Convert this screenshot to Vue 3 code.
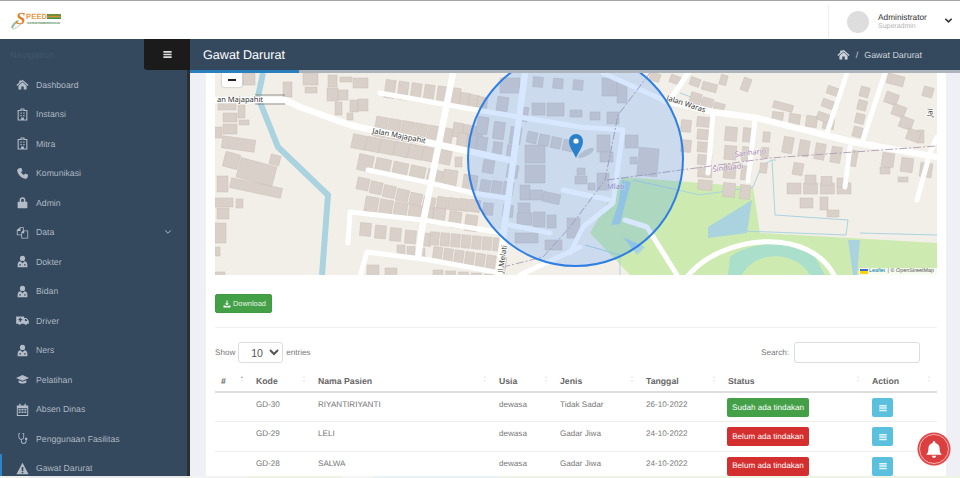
<template>
  <div class="app">
    <header class="topbar">
      <svg class="logo" viewBox="0 0 52 20" width="52" height="20">
        <path d="M1 18 C2 14 5 11 9 10 L8 12 C6 13 4 15 3 18 Z" fill="#8fb89a" />
        <path d="M2 19 C5 19 8 17 11 14" fill="none" stroke="#b9cdb9" stroke-width="1" />
        <text x="6" y="14" class="logo-s">S</text>
        <text x="16" y="9" class="logo-name" textLength="21">PEED</text>
        <rect x="37" y="4" width="14" height="2" fill="#6f8f3a" />
        <rect x="37" y="6" width="14" height="1.2" fill="#d98a2b" />
        <rect x="37" y="7.2" width="14" height="1.8" fill="#4c8a3f" />
        <text x="17" y="14" class="logo-sub" textLength="33">SISTEM PEMBERDAYAAN</text>
      </svg>
      <div class="user">
        <div class="avatar"></div>
        <div class="user-text">
          <div class="user-name">Administrator</div>
          <div class="user-role">Superadmin</div>
        </div>
        <svg class="user-caret" viewBox="0 0 10 10" width="9" height="9">
          <path d="M1.5 3 L5 6.5 L8.5 3" fill="none" stroke="#333" stroke-width="1.8" />
        </svg>
      </div>
    </header>

    <div class="frame">
      <aside class="sidebar">
        <div class="side-top">
          <span class="nav-label">Navigation</span>
          <button class="toggle">
            <svg viewBox="0 0 16 16" width="11" height="11"><path :d="icons.bars" fill="#ddd" /></svg>
          </button>
        </div>
        <nav class="nav">
          <a v-for="item in menu" :key="item.label" class="nav-item" :class="{ active: item.active }">
            <svg class="nav-icon" viewBox="0 0 16 16" width="13" height="13">
              <path :d="icons[item.icon]" fill="#b4bdc7" fill-rule="evenodd" />
            </svg>
            <span class="nav-text">{{ item.label }}</span>
            <svg v-if="item.sub" class="nav-caret" viewBox="0 0 10 10" width="8" height="8">
              <path d="M1.5 3 L5 6.5 L8.5 3" fill="none" stroke="#b4bdc7" stroke-width="1.2" />
            </svg>
          </a>
        </nav>
      </aside>

      <main class="main">
        <div class="page-head">
          <h1 class="page-title">Gawat Darurat</h1>
          <div class="crumbs">
            <svg viewBox="0 0 16 16" width="13" height="13"><path :d="icons.home" fill="#cdd3d9" fill-rule="evenodd" /></svg>
            <span class="crumb-sep">/</span>
            <span>Gawat Darurat</span>
          </div>
        </div>
        <div class="load-strip"><div class="load-bar"></div></div>

        <div class="content">
          <section class="card">
            <div class="map">
              <svg class="map-svg" viewBox="215 73 722 202" width="722" height="202">
                <rect x="215" y="73" width="722" height="202" fill="#f2efe9" />
                <polygon points="622,177 753,187 760,233 937,243 937,275 630,275 590,233" fill="#cdebb0" />
                <path d="M728 275 L730 257 C745 243 795 238 813 253 L825 275 Z" fill="#aae0cb" />
                <path d="M742 275 C755 250 795 250 810 275 Z" fill="#cdebb0" />
                <polygon points="708,227 752,200 747,233 708,238" fill="#aad3df" />
                <polygon points="622,180 631,182 623,212 620,224 611,225 618,205" fill="#aad3df" />
                <polygon points="623,237 645,247 637,255" fill="#aad3df" />
                <polygon points="848,240 860,240 857,275 853,275" fill="#aad3df" />
                <polyline points="263,73 258,97 278,147 328,195 322,275" class="river" />
                <polyline v-for="(s, i) in streams" :key="'st' + i" :points="s" class="stream" />
                <rect v-for="(b, i) in buildings" :key="'b' + i" :x="b.x" :y="b.y" :width="b.w" :height="b.h"
                  :transform="`rotate(${b.r} ${b.x + b.w / 2} ${b.y + b.h / 2})`" class="building" />
                <polyline v-for="(r, i) in roads" :key="'r' + i" :points="r" class="road" />
                <polyline v-for="(r, i) in lanes" :key="'l' + i" :points="r" class="lane" />
                <path d="M687 277 C720 235 810 225 835 277" class="lane" />
                <polyline points="625,220 647,227 677,275" class="lane" />
                <polyline points="607,180 770,158 937,146" class="border-line" />
                <polyline points="650,73 618,115 605,180 570,227 543,257 503,267" class="border-line" />
                <line x1="255" y1="95" x2="285" y2="95" stroke="#555" stroke-width=".6" />
                <line x1="255" y1="104" x2="285" y2="104" stroke="#555" stroke-width=".6" />

                <text x="217" y="102" class="map-label">an Majapahit</text>
                <text x="372" y="133" transform="rotate(11 372 133)" class="map-label">Jalan Majapahit</text>
                <text x="666" y="100" transform="rotate(18 666 100)" class="map-label">Jalan Waras</text>
                <text x="503" y="273" transform="rotate(-82 503 273)" class="map-label">Jl Melati</text>
                <text x="932" y="117" transform="rotate(-82 932 117)" class="map-label">Jal</text>
                <text x="735" y="157" transform="rotate(-7 735 157)" class="area-label">Sariharjo</text>
                <text x="713" y="172" transform="rotate(-7 713 172)" class="area-label">Sinduadi</text>
                <text x="607" y="189" class="area-label">Mlati</text>

                <circle cx="575.5" cy="158.5" r="107.5" class="radius" />
                <ellipse cx="586" cy="153" rx="9" ry="3" fill="#000" opacity=".12" transform="rotate(-30 586 153)" />
                <path d="M576 158 C573 151 569 147 569 141 A7 7 0 0 1 583 141 C583 147 579 151 576 158 Z" fill="#2a81cb" />
                <circle cx="576" cy="141" r="2.6" fill="#fff" />
              </svg>
              <div class="zoom-ctl"><span class="zoom-minus"></span></div>
              <div class="attribution"><span class="flag"></span><span class="attr-link">Leaflet</span> | © OpenStreetMap</div>
            </div>

            <button class="btn-download">
              <svg viewBox="0 0 16 16" width="8" height="8"><path :d="icons.download" fill="#fff" /></svg>
              Download
            </button>
            <div class="divider"></div>

            <div class="dt-controls">
              <label class="dt-length">
                Show
                <select class="dt-select"><option>10</option></select>
                entries
              </label>
              <label class="dt-search">
                Search:
                <input class="dt-input" type="text" />
              </label>
            </div>

            <table class="dt">
              <colgroup>
                <col v-for="c in columns" :key="c.name" :style="{ width: c.width + 'px' }" />
              </colgroup>
              <thead>
                <tr>
                  <th v-for="c in columns" :key="c.name">
                    <span>{{ c.name }}</span>
                    <span class="sort"><i class="up" :class="{ on: c.name === '#' }"></i><i class="down"></i></span>
                  </th>
                </tr>
              </thead>
              <tbody>
                <tr v-for="row in rows" :key="row.kode">
                  <td></td>
                  <td>{{ row.kode }}</td>
                  <td>{{ row.nama }}</td>
                  <td>{{ row.usia }}</td>
                  <td>{{ row.jenis }}</td>
                  <td>{{ row.tanggal }}</td>
                  <td class="cell-btn">
                    <span class="status" :class="row.done ? 'done' : 'todo'">
                      {{ row.done ? 'Sudah ada tindakan' : 'Belum ada tindakan' }}
                    </span>
                  </td>
                  <td class="cell-btn">
                    <button class="btn-action">
                      <svg viewBox="0 0 16 16" width="10" height="10"><path :d="icons.bars" fill="#e6f5fa" /></svg>
                    </button>
                  </td>
                </tr>
              </tbody>
            </table>
          </section>
        </div>
      </main>
    </div>

    <div class="bottom-strip"></div>

    <button class="bell">
      <svg viewBox="0 0 16 16" width="20" height="20"><path :d="icons.bell" fill="#fff" /></svg>
    </button>
  </div>
</template>

<script setup>
const icons = {
  home: 'M8 2 L15.5 8.5 L14.5 9.7 L8 4.2 L1.5 9.7 L.5 8.5 L4 5.5 V3 H6 V3.8 Z M3 9.5 L8 5.3 L13 9.5 V14 H9.5 V10.5 H6.5 V14 H3 Z',
  hospital: 'M5.5 .5h5v2H14v13H2V2.5h3.5z M3.3 3.8V14.2h3v-2.4h3.4v2.4h3V3.8z M6.8 1.7V3.2h2.4V1.7z M5.5 5.5h1.6v1.6H5.5z M8.9 5.5h1.6v1.6H8.9z M5.5 8.5h1.6v1.6H5.5z M8.9 8.5h1.6v1.6H8.9z',
  phone: 'M4 1.5 L6.5 1 L8 4.8 L6.2 6.2 C6.8 7.8 8.2 9.2 9.8 9.8 L11.2 8 L15 9.5 L14.5 12 C14.2 13.8 12.5 14.8 10.8 14.4 C6.5 13.4 2.6 9.5 1.6 5.2 C1.2 3.5 2.2 1.8 4 1.5 Z',
  lock: 'M4.5 7V5a3.5 3.5 0 0 1 7 0v2H13a1 1 0 0 1 1 1v6a1 1 0 0 1-1 1H3a1 1 0 0 1-1-1V8a1 1 0 0 1 1-1z M6.3 7h3.4V5a1.7 1.7 0 0 0-3.4 0z',
  files: 'M1 5 L5 1.5 H9.5 V5.5 H15 V15.5 H6.5 V11.5 H1 Z M2 5.8 V10.5 H6.5 V8 L8.5 5.5 V2.5 H5.5 V6 H2.2 Z M7.5 8.5 V14.5 H14 V6.5 H10 V9 H7.8 Z',
  userMd: 'M8 1a3.2 3.2 0 1 1 0 6.4A3.2 3.2 0 0 1 8 1z M2 15v-3c0-2.5 1.5-4 3.5-4.3L8 10l2.5-2.3C12.5 8 14 9.5 14 12v3z M4 12.2a1 1 0 1 0 2 0a1 1 0 1 0-2 0z M10 12.2a1 1 0 1 0 2 0a1 1 0 1 0-2 0z',
  ambulance: 'M.2 3h9.8v2h3l2.8 3.5V12h-1.9a2 2 0 0 1-3.8 0H6.4a2 2 0 0 1-3.8 0H.2z M11 6.2V8.5h3l-1.6-2.3z M4.5 4.6v1.6H3v1.6h1.5v1.6h1.6V7.8h1.5V6.2H6.1V4.6z',
  cap: 'M8 2.5 L16 6 L8 9.5 L0 6Z M3.3 8.8 L8 10.8 L12.7 8.8 V11.8 C11 13.4 5 13.4 3.3 11.8Z',
  calendar: 'M1 3h3V1h1.6v2h4.8V1H12v2h3v13H1z M2.2 6.5v8.3h11.6V6.5z M3.3 7.5h2.4v1.8H3.3z M6.8 7.5h2.4v1.8H6.8z M10.3 7.5h2.4v1.8h-2.4z M3.3 10.5h2.4v1.8H3.3z M6.8 10.5h2.4v1.8H6.8z M10.3 10.5h2.4v1.8h-2.4z',
  stethoscope: 'M3 1.5h2v1H4V6a2.5 2.5 0 0 0 5 0V2.5H8v-1h2V6a3.5 3.5 0 0 1-3 3.46V11a2.5 2.5 0 0 0 5 0V9.8a1.5 1.5 0 1 1 1 0V11a3.5 3.5 0 0 1-7 0V9.46A3.5 3.5 0 0 1 3 6z',
  warning: 'M8 1 L15.5 15 H.5Z M7 6V11H9V6Z M7 12v1.8H9V12Z',
  download: 'M7 1h2v6h3L8 11 4 7h3z M1 11h3.5L6 12.5h4L11.5 11H15v4H1z',
  bars: 'M2 3h12v2.4H2z M2 6.8h12v2.4H2z M2 10.6h12V13H2z',
  bell: 'M8 1.5a1 1 0 0 1 1 1v.6c2.2.5 3.5 2.3 3.5 4.4 0 3 .8 4 1.8 5H1.7c1-1 1.8-2 1.8-5 0-2.1 1.3-3.9 3.5-4.4v-.6a1 1 0 0 1 1-1z M6.3 13.4h3.4a1.7 1.7 0 0 1-3.4 0z'
}

const menu = [
  { label: 'Dashboard', icon: 'home' },
  { label: 'Instansi', icon: 'hospital' },
  { label: 'Mitra', icon: 'hospital' },
  { label: 'Komunikasi', icon: 'phone' },
  { label: 'Admin', icon: 'lock' },
  { label: 'Data', icon: 'files', sub: true },
  { label: 'Dokter', icon: 'userMd' },
  { label: 'Bidan', icon: 'userMd' },
  { label: 'Driver', icon: 'ambulance' },
  { label: 'Ners', icon: 'userMd' },
  { label: 'Pelatihan', icon: 'cap' },
  { label: 'Absen Dinas', icon: 'calendar' },
  { label: 'Penggunaan Fasilitas', icon: 'stethoscope' },
  { label: 'Gawat Darurat', icon: 'warning', active: true }
]

const columns = [
  { name: '#', width: 35 },
  { name: 'Kode', width: 62 },
  { name: 'Nama Pasien', width: 181 },
  { name: 'Usia', width: 61 },
  { name: 'Jenis', width: 86 },
  { name: 'Tanggal', width: 82 },
  { name: 'Status', width: 144 },
  { name: 'Action', width: 71 }
]

const rows = [
  { kode: 'GD-30', nama: 'RIYANTIRIYANTI', usia: 'dewasa', jenis: 'Tidak Sadar', tanggal: '26-10-2022', done: true },
  { kode: 'GD-29', nama: 'LELI', usia: 'dewasa', jenis: 'Gadar Jiwa', tanggal: '24-10-2022', done: false },
  { kode: 'GD-28', nama: 'SALWA', usia: 'dewasa', jenis: 'Gadar Jiwa', tanggal: '24-10-2022', done: false }
]

// map roads, in screen coordinates
const roads = [
  '215,100 285,100 300,107 350,125 440,145 510,160',
  '663,100 713,112 757,118 853,142 937,157',
  '453,73 423,223 418,258',
  '525,73 505,223 498,277'
]

const lanes = [
  '380,93 477,110 580,127 623,130 613,203 583,227 570,253',
  '368,170 430,183 473,193 507,198',
  '348,243 350,212 423,220 503,233',
  '510,225 550,233',
  '360,277 367,252 430,260 500,273',
  '520,275 580,247',
  '563,190 610,200',
  '603,73 663,100',
  '688,73 670,100',
  '713,113 708,173',
  '755,120 748,181',
  '850,147 845,187',
  '928,160 917,200',
  '847,73 827,133',
  '885,73 863,140',
  '937,137 928,157'
]

const streams = [
  '633,180 700,195 753,187 762,165 772,160 776,160',
  '772,160 775,215 848,220 846,235 770,232 708,230',
  '860,233 937,235',
  '680,93 713,105',
  '585,245 620,255 620,275'
]

// a line of similar houses between two points
const row = (x0, y0, x1, y1, n, w, h, r = 0) =>
  Array.from({ length: n }, (_, i) => {
    const t = n > 1 ? i / (n - 1) : 0
    return { x: x0 + (x1 - x0) * t, y: y0 + (y1 - y0) * t, w, h, r }
  })

const single = [
  [218, 102, 18, 8], [238, 105, 7, 13], [223, 113, 14, 9], [239, 120, 10, 5], [223, 124, 14, 10],
  [215, 127, 7, 11], [222, 138, 33, 12, 8], [224, 153, 15, 15, 15], [238, 162, 37, 20, 15],
  [270, 155, 10, 10, 15], [230, 183, 52, 10, 12], [217, 176, 11, 16], [215, 198, 18, 9],
  [236, 199, 7, 9], [217, 208, 12, 11], [215, 223, 11, 20], [215, 247, 5, 9], [215, 272, 10, 4],
  [283, 82, 9, 15], [243, 73, 12, 12], [303, 73, 15, 12], [305, 87, 12, 6], [328, 75, 9, 12],
  [340, 77, 12, 5], [353, 78, 15, 10], [327, 88, 11, 13], [338, 90, 10, 10], [335, 102, 7, 13],
  [350, 100, 8, 12], [358, 99, 10, 12], [347, 113, 6, 7], [455, 157, 7, 10],
  [702, 83, 15, 8, 15], [720, 75, 7, 10, 15], [742, 78, 8, 13, 20], [773, 103, 20, 7, 15],
  [793, 163, 10, 12, 10], [800, 198, 13, 10], [820, 197, 8, 13], [827, 210, 12, 7],
  [898, 177, 10, 5], [880, 167, 10, 7], [887, 75, 17, 10, 15], [923, 87, 10, 10, 15], [917, 130, 7, 13],
  [500, 78, 20, 15], [547, 103, 17, 13], [532, 103, 13, 12], [525, 145, 20, 18], [525, 165, 20, 18],
  [520, 185, 10, 15], [530, 190, 13, 10], [543, 193, 17, 10, 12], [518, 203, 12, 12], [517, 213, 15, 12],
  [533, 212, 12, 15], [547, 215, 9, 13], [515, 233, 23, 10], [545, 240, 17, 10], [567, 218, 13, 20],
  [602, 78, 15, 18], [617, 83, 10, 20], [570, 110, 12, 7], [590, 112, 10, 8], [607, 112, 12, 12],
  [597, 135, 13, 17], [600, 152, 13, 10], [625, 135, 13, 13], [638, 148, 20, 28, 5], [630, 157, 7, 7],
  [577, 168, 8, 7], [575, 176, 12, 8], [588, 183, 7, 7], [597, 173, 12, 17]
].map(([x, y, w, h, r = 0]) => ({ x, y, w, h, r }))

const buildings = [
  ...single,
  ...row(385, 80, 450, 88, 6, 10, 18, 8),
  ...row(375, 117, 440, 128, 6, 12, 20, 10),
  ...row(352, 135, 437, 150, 7, 14, 14, 12),
  ...row(358, 155, 427, 170, 5, 15, 16, 12),
  ...row(357, 178, 423, 197, 6, 12, 12, 12),
  ...row(365, 197, 423, 208, 5, 13, 15, 10),
  ...row(360, 223, 420, 233, 5, 11, 13, 5),
  ...row(397, 245, 417, 248, 3, 8, 12),
  ...row(367, 265, 385, 268, 2, 12, 12),
  ...row(433, 270, 497, 275, 6, 10, 10),
  ...row(443, 170, 463, 175, 2, 14, 16, 8),
  ...row(437, 197, 470, 200, 4, 10, 12, 8),
  ...row(433, 208, 465, 215, 3, 12, 16, 8),
  ...row(430, 232, 493, 238, 7, 9, 13, 5),
  ...row(433, 247, 497, 257, 7, 9, 14, 8),
  ...row(453, 123, 473, 127, 3, 10, 14, 8),
  ...row(457, 133, 477, 137, 3, 10, 14, 8),
  ...row(460, 93, 477, 97, 3, 10, 14, 8),
  ...row(497, 97, 517, 107, 2, 11, 14, 8),
  ...row(477, 117, 510, 127, 3, 11, 17, 8),
  ...row(493, 142, 507, 145, 2, 9, 12, 8),
  ...row(483, 160, 507, 165, 2, 11, 13, 10),
  ...row(480, 180, 503, 182, 3, 10, 15, 10),
  ...row(483, 203, 503, 205, 2, 10, 12, 5),
  ...row(533, 77, 573, 80, 3, 10, 10, 5),
  ...row(527, 132, 563, 140, 4, 10, 11, 12),
  ...row(650, 73, 690, 78, 3, 10, 8, 20),
  ...row(690, 93, 713, 103, 3, 11, 12, 15),
  ...row(697, 117, 698, 180, 6, 14, 10, 5),
  ...row(681, 120, 681, 140, 2, 10, 12, 5),
  ...row(725, 127, 723, 183, 4, 12, 14, 5),
  ...row(743, 128, 740, 185, 4, 10, 14, 5),
  ...row(763, 132, 760, 163, 3, 7, 10, 5),
  ...row(772, 112, 823, 118, 4, 11, 11, 8),
  ...row(827, 87, 817, 113, 3, 12, 8, 20),
  ...row(860, 87, 853, 127, 4, 9, 10, 15),
  ...row(783, 137, 847, 150, 5, 10, 16, 10),
  ...row(787, 183, 837, 183, 4, 14, 11),
  ...row(805, 175, 837, 178, 3, 11, 9),
  ...row(882, 153, 920, 163, 3, 12, 14, 8),
  ...row(885, 93, 907, 130, 4, 13, 11, 20)
]
</script>

<style scoped>
.app {
  position: relative;
  width: 960px;
  height: 478px;
  overflow: hidden;
  display: flex;
  flex-direction: column;
  font-family: "Liberation Sans", Arial, sans-serif;
  text-rendering: geometricPrecision;
  background: #fff;
}

.topbar {
  height: 39px;
  flex: none;
  box-sizing: border-box;
  border-top: 1px solid #a6a6a6;
  display: flex;
  justify-content: space-between;
  align-items: center;
  padding-left: 10px;
  background: #fff;
}

.logo-s {
  font: italic 700 17px "Liberation Serif", serif;
  fill: #e0822e;
}

.logo-name {
  font: 700 7.5px "Liberation Sans", sans-serif;
  fill: #e8984a;
}

.logo-sub {
  font: 700 2.8px "Liberation Sans", sans-serif;
  fill: #5c8f5c;
}

.user {
  height: 33px;
  margin-top: 4px;
  width: 132px;
  box-sizing: border-box;
  border-left: 1px solid #eee;
  display: flex;
  align-items: center;
  padding-left: 18px;
  align-self: flex-start;
}

.avatar {
  width: 22px;
  height: 22px;
  border-radius: 50%;
  background: #ddd;
  flex: none;
}

.user-text {
  margin-left: 9px;
  width: 66px;
}

.user-name {
  font-size: 8.3px;
  line-height: 10px;
  color: #333;
}

.user-role {
  font-size: 7px;
  line-height: 9px;
  color: #b3b3b3;
}

.user-caret {
  margin-top: -2px;
}

.frame {
  flex: 1;
  display: flex;
  min-height: 0;
}

.sidebar {
  width: 190px;
  flex: none;
  display: flex;
  flex-direction: column;
  min-height: 0;
  overflow: hidden;
  background: #34495e;
}

.side-top {
  height: 31px;
  flex: none;
  display: flex;
  justify-content: space-between;
  align-items: center;
  padding-left: 10px;
}

.nav-label {
  font-size: 9.3px;
  color: #40566c;
}

.toggle {
  width: 46px;
  height: 31px;
  border: 0;
  padding: 0;
  border-bottom-left-radius: 3px;
  background: #1b1b1b;
  display: flex;
  align-items: center;
  justify-content: center;
}

.nav {
  flex: 1;
  min-height: 0;
  overflow: hidden;
  border-right: 3px solid #2b2f33;
}

.nav-item {
  height: 29.5px;
  box-sizing: border-box;
  display: flex;
  align-items: center;
  padding-left: 13.5px;
  border-left: 2px solid transparent;
  font-size: 8.7px;
  color: #aeb8c2;
}

.nav-item.active {
  border-left-color: #2a86c9;
}

.nav-text {
  margin-left: 7.5px;
  flex: 1;
}

.nav-caret {
  margin-right: 15px;
}

.main {
  flex: 1;
  min-width: 0;
  display: flex;
  flex-direction: column;
  background: #eef0f5;
}

.page-head {
  height: 31px;
  flex: none;
  display: flex;
  justify-content: space-between;
  align-items: center;
  padding: 0 38px 0 13px;
  background: #34495e;
}

.page-title {
  margin: 0;
  font-size: 12.6px;
  font-weight: 400;
  color: #fff;
}

.crumbs {
  display: flex;
  align-items: center;
  font-size: 8.9px;
  color: #cdd3d9;
}

.crumb-sep {
  margin: 0 6px;
}

.load-strip {
  height: 3px;
  flex: none;
  background: #aeb4bb;
}

.load-bar {
  width: 109px;
  height: 100%;
  background: #2a7fbd;
}

.content {
  flex: 1;
  min-height: 0;
  overflow: hidden;
  padding: 0 14px 0 16px;
}

.card {
  background: #fff;
  padding: 0 9px 20px;
  height: 100%;
  box-sizing: border-box;
}

.map {
  position: relative;
  width: 722px;
  height: 202px;
  overflow: hidden;
}

.map-svg {
  display: block;
}

.river {
  fill: none;
  stroke: #aad3df;
  stroke-width: 6;
  stroke-linejoin: miter;
}

.stream {
  fill: none;
  stroke: #aad3df;
  stroke-width: 1;
}

.building {
  fill: #d9d0c9;
  stroke: #c9bfb7;
  stroke-width: .5;
}

.road {
  fill: none;
  stroke: #fff;
  stroke-width: 6.5;
  stroke-linejoin: round;
}

.lane {
  fill: none;
  stroke: #fff;
  stroke-width: 5;
  stroke-linecap: round;
  stroke-linejoin: round;
}

.border-line {
  fill: none;
  stroke: #b5a3bb;
  stroke-width: 1;
  stroke-dasharray: 8 2 2 2;
}

.map-label {
  font: 7.5px "Noto Sans", sans-serif;
  fill: #333;
  stroke: #fff;
  stroke-width: 1.5px;
  paint-order: stroke;
}

.area-label {
  font: 7.5px "Noto Sans", sans-serif;
  fill: #a687ad;
  stroke: #fff;
  stroke-width: 1px;
  stroke-opacity: .6;
  paint-order: stroke;
}

.radius {
  fill: #3388ff;
  fill-opacity: .2;
  stroke: #2f7fe3;
  stroke-width: 2;
}

.zoom-ctl {
  position: absolute;
  top: 0;
  left: 7px;
  width: 20px;
  height: 14px;
  background: #fff;
  border-radius: 0 0 2px 2px;
  box-shadow: 0 0 2px rgba(0, 0, 0, .35);
  display: flex;
  align-items: center;
  justify-content: center;
}

.zoom-minus {
  width: 8px;
  height: 1.5px;
  background: #222;
}

.attribution {
  position: absolute;
  right: 0;
  bottom: 0;
  height: 7px;
  padding: 0 3px 0 1px;
  display: flex;
  align-items: center;
  gap: 1px;
  font-size: 5.4px;
  line-height: 7px;
  color: #555;
  white-space: pre;
  background: rgba(255, 255, 255, .8);
}

.flag {
  width: 8px;
  height: 5px;
  background: linear-gradient(#3d6cc0 50%, #ffd500 50%);
}

.attr-link {
  color: #0078a8;
}

.btn-download {
  display: flex;
  align-items: center;
  gap: 2px;
  margin-top: 19px;
  width: 57px;
  height: 19px;
  padding: 0 0 0 7px;
  border: 1px solid #3f9a42;
  border-radius: 2px;
  background: #43a047;
  color: #e8f4e8;
  font: 7.4px "Liberation Sans", sans-serif;
  text-rendering: geometricPrecision;
}

.divider {
  height: 1px;
  margin: 14px 0;
  background: #f0f0f0;
}

.dt-controls {
  height: 21px;
  padding-right: 17px;
  display: flex;
  justify-content: space-between;
  font-size: 8.1px;
  color: #777;
}

.dt-length,
.dt-search {
  display: flex;
  align-items: center;
}

.dt-select {
  width: 45px;
  height: 21px;
  margin: 0 3px 0 3px;
  padding: 0 0 0 8px;
  border: 1px solid #ddd;
  border-radius: 3px;
  background: #fff;
  font: 10.5px "Liberation Sans", sans-serif;
  color: #555;
}

.dt-input {
  width: 126px;
  height: 21px;
  box-sizing: border-box;
  margin-left: 5px;
  border: 1px solid #ddd;
  border-radius: 3px;
  outline: none;
}

.dt {
  width: 722px;
  table-layout: fixed;
  border-collapse: collapse;
  font-size: 8.1px;
  color: #777;
}

.dt th {
  position: relative;
  height: 29px;
  box-sizing: border-box;
  padding: 7px 0 0 6px;
  border-bottom: 2px solid #ddd;
  text-align: left;
  font-size: 8.7px;
  font-weight: 700;
  color: #666;
}

.sort {
  position: absolute;
  right: 7px;
  top: 13px;
  display: flex;
  flex-direction: column;
  gap: 2px;
}

.sort i {
  width: 0;
  height: 0;
  border-left: 1.5px solid transparent;
  border-right: 1.5px solid transparent;
}

.sort .up {
  border-bottom: 2px solid #e4e4e4;
}

.sort .up.on {
  border-bottom-color: #999;
}

.sort .down {
  border-top: 2px solid #e4e4e4;
}

.dt td {
  height: 29.5px;
  box-sizing: border-box;
  padding: 6px 0 0 6px;
  border-bottom: 1px solid #eee;
  vertical-align: top;
  line-height: 12px;
}

.dt td.cell-btn {
  padding-top: 5px;
}

.status {
  display: inline-flex;
  align-items: center;
  justify-content: center;
  width: 82px;
  height: 19px;
  margin-left: -1px;
  border-radius: 2px;
  font-size: 8.1px;
  color: #fff;
}

.status.done {
  background: #43a047;
}

.status.todo {
  background: #d32f2f;
}

.btn-action {
  display: flex;
  align-items: center;
  justify-content: center;
  width: 21px;
  height: 19px;
  padding: 0;
  border: 0;
  border-radius: 2px;
  background: #5bc0de;
}

.bottom-strip {
  height: 2px;
  flex: none;
  background: linear-gradient(90deg, #eef2ea 0 30px, #e8e8e8 30px 190px, #f3f3f3 190px 248px, #edf4e2 248px 342px, #f4f4f4 342px 373px, #e8f1f4 373px 500px, #eef4e4 500px 960px);
}

.bell {
  position: absolute;
  left: 919px;
  top: 434px;
  width: 30px;
  height: 30px;
  padding: 0;
  border: 1.5px solid #f3b0b0;
  border-radius: 50%;
  background: #dc3f3f;
  box-shadow: 0 0 0 1.5px #e04a4a, 0 1px 3px rgba(0, 0, 0, .25);
  display: flex;
  align-items: center;
  justify-content: center;
}
</style>

<style>
html,
body {
  margin: 0;
  overflow: hidden;
}
</style>
